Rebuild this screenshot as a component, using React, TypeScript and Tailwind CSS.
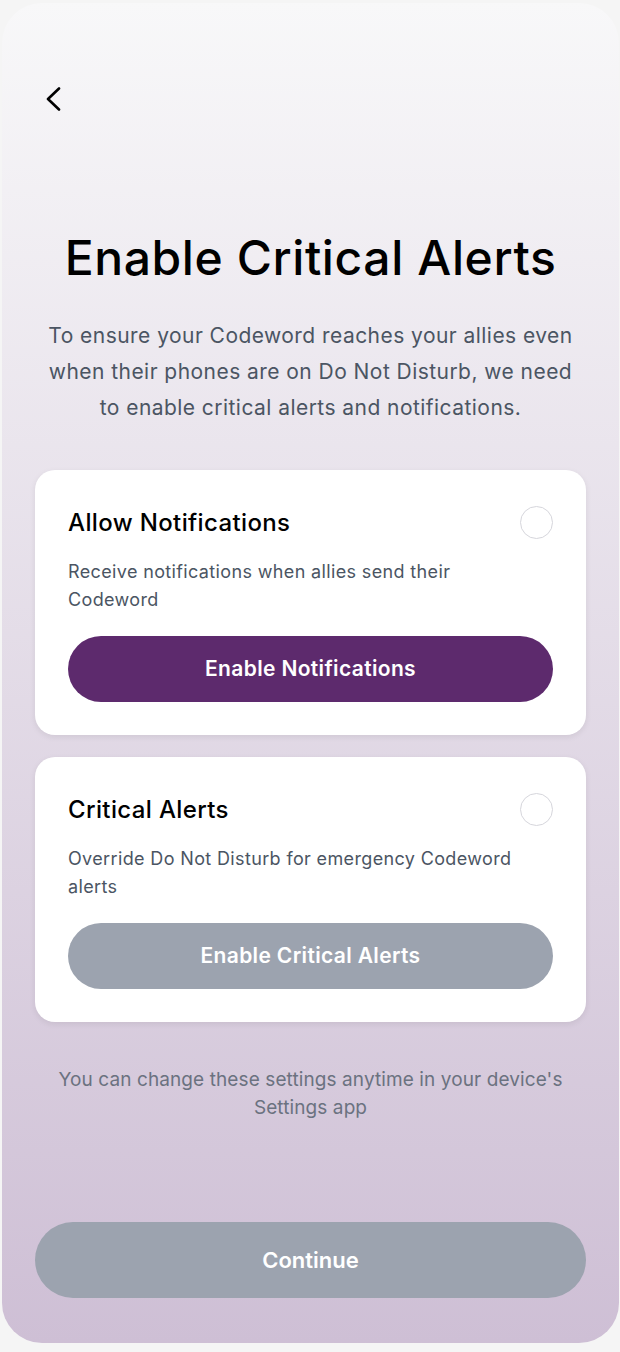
import { ReactElement } from 'react';

type PermissionCardProps = {
  title: string;
  description: string;
  action: string;
  enabled: boolean;
};

const PermissionCard = ({
  title,
  description,
  action,
  enabled,
}: PermissionCardProps): ReactElement => {
  return (
    <div className="flex flex-col rounded-[20px] bg-white px-[33px] pt-9 pb-[33px] shadow-[0_2px_6px_rgba(0,0,0,0.08)]">
      <div className="flex items-center justify-between">
        <h2 className="text-[24px] leading-8 font-medium tracking-[0.37px] text-black">
          {title}
        </h2>
        <span className="h-[33px] w-[33px] rounded-full border border-[#d6d6dc]" />
      </div>
      <p className="mt-[19px] max-w-[470px] text-[18px] leading-7 tracking-[0.36px] text-[#4b5563]">
        {description}
      </p>
      <button
        type="button"
        className={
          enabled
            ? 'mt-[22px] h-[66px] w-full rounded-full bg-[#5d2a6d] text-[21px] font-semibold tracking-[0.35px] text-white'
            : 'mt-[22px] h-[66px] w-full rounded-full bg-[#9ca3af] text-[21px] font-semibold tracking-[0.35px] text-white'
        }
      >
        {action}
      </button>
    </div>
  );
};

export default function App(): ReactElement {
  return (
    <div className="min-h-[1352px] bg-[#f5f5f5] pt-[3px] pl-[2px] pr-[1px] font-['Inter','Noto_Sans',sans-serif]">
      <div className="flex h-[1340px] flex-col rounded-[40px] bg-gradient-to-b from-[#f8f8f9] to-[#cebfd5] px-[33px] pb-[45px]">
        <button type="button" className="mt-[84px] ml-[9px] h-6 w-5 self-start">
          <svg width="20" height="24" viewBox="0 0 20 24" fill="none">
            <polyline
              points="15,1.5 4,12 15,22.5"
              stroke="#000"
              strokeWidth="2.6"
              strokeLinecap="round"
              strokeLinejoin="round"
            />
          </svg>
        </button>
        <h1 className="mt-[119px] text-center text-[48px] leading-[56px] font-medium tracking-[0.6px] text-black">
          Enable Critical Alerts
        </h1>
        <p className="mt-8 px-[10px] text-center text-[21px] leading-9 tracking-[0.45px] text-[#4b5563]">
          To ensure your Codeword reaches your allies even when their phones are on Do
          Not Disturb, we need to enable critical alerts and notifications.
        </p>
        <div className="mt-11 flex flex-col gap-[22px]">
          <PermissionCard
            title="Allow Notifications"
            description="Receive notifications when allies send their Codeword"
            action="Enable Notifications"
            enabled
          />
          <PermissionCard
            title="Critical Alerts"
            description="Override Do Not Disturb for emergency Codeword alerts"
            action="Enable Critical Alerts"
            enabled={false}
          />
        </div>
        <p className="mt-11 text-center text-[19px] leading-7 tracking-[0.1px] text-[#6b7280]">
          You can change these settings anytime in your device's Settings app
        </p>
        <button
          type="button"
          className="mt-auto h-[76px] w-full rounded-full bg-[#9ca3af] text-[22px] font-semibold text-white"
        >
          Continue
        </button>
      </div>
    </div>
  );
}
